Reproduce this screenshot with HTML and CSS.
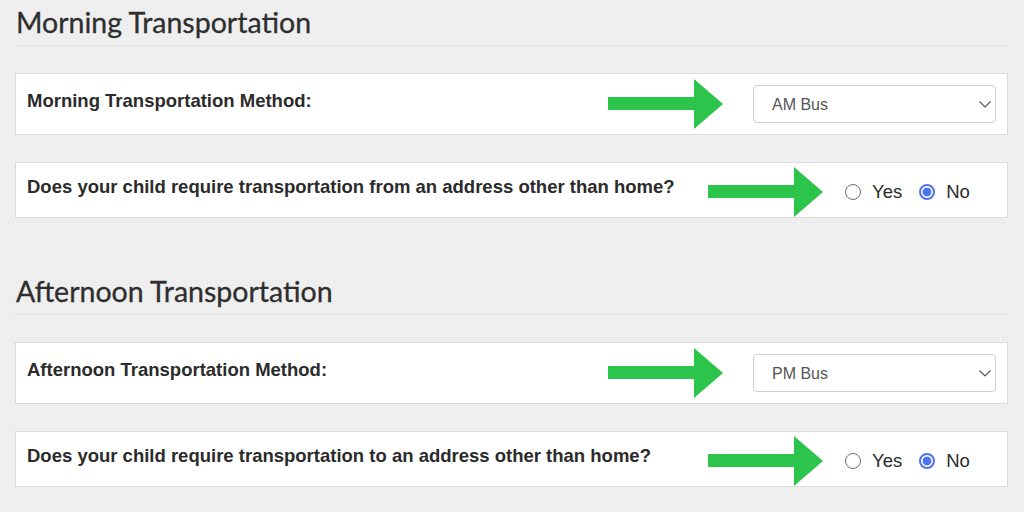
FILE: index.html
```html
<!DOCTYPE html>
<html lang="en">
<head>
<meta charset="utf-8">
<title>Transportation</title>
<link rel="stylesheet" href="styles.css">
</head>
<body>
<main class="page">
  <section class="group">
    <h2 class="group-title">Morning Transportation</h2>

    <div class="field field-select">
      <label class="field-label" for="am-method">Morning Transportation Method:</label>
      <svg class="pointer" viewBox="0 0 115 50" width="115" height="50" aria-hidden="true">
        <polygon points="0,18 86,18 86,0 115,25 86,50 86,31 0,31"/>
      </svg>
      <div class="select-wrap">
        <select id="am-method" class="select">
          <option>AM Bus</option>
        </select>
        <svg class="chevron" viewBox="0 0 12 7" width="12" height="7" aria-hidden="true">
          <polyline points="0.5,0.5 6,6 11.5,0.5"/>
        </svg>
      </div>
    </div>

    <div class="field field-radio">
      <span class="field-label">Does your child require transportation from an address other than home?</span>
      <svg class="pointer" viewBox="0 0 115 50" width="115" height="50" aria-hidden="true">
        <polygon points="0,18 86,18 86,0 115,25 86,50 86,31 0,31"/>
      </svg>
      <div class="radios">
        <label class="radio"><input type="radio" name="am-alt"><span>Yes</span></label>
        <label class="radio"><input type="radio" name="am-alt" checked><span>No</span></label>
      </div>
    </div>
  </section>

  <section class="group">
    <h2 class="group-title">Afternoon Transportation</h2>

    <div class="field field-select">
      <label class="field-label" for="pm-method">Afternoon Transportation Method:</label>
      <svg class="pointer" viewBox="0 0 115 50" width="115" height="50" aria-hidden="true">
        <polygon points="0,18 86,18 86,0 115,25 86,50 86,31 0,31"/>
      </svg>
      <div class="select-wrap">
        <select id="pm-method" class="select">
          <option>PM Bus</option>
        </select>
        <svg class="chevron" viewBox="0 0 12 7" width="12" height="7" aria-hidden="true">
          <polyline points="0.5,0.5 6,6 11.5,0.5"/>
        </svg>
      </div>
    </div>

    <div class="field field-radio">
      <span class="field-label">Does your child require transportation to an address other than home?</span>
      <svg class="pointer" viewBox="0 0 115 50" width="115" height="50" aria-hidden="true">
        <polygon points="0,18 86,18 86,0 115,25 86,50 86,31 0,31"/>
      </svg>
      <div class="radios">
        <label class="radio"><input type="radio" name="pm-alt"><span>Yes</span></label>
        <label class="radio"><input type="radio" name="pm-alt" checked><span>No</span></label>
      </div>
    </div>
  </section>
</main>
</body>
</html>
```

FILE: styles.css
```css
* {
  box-sizing: border-box;
}

html,
body {
  margin: 0;
  height: 100%;
}

body {
  background-color: #f0f0f0;
  background-image:
    linear-gradient(45deg, rgba(0, 0, 0, 0.012) 25%, transparent 25%, transparent 75%, rgba(0, 0, 0, 0.012) 75%),
    linear-gradient(45deg, rgba(0, 0, 0, 0.012) 25%, transparent 25%, transparent 75%, rgba(0, 0, 0, 0.012) 75%);
  background-size: 4px 4px;
  background-position: 0 0, 2px 2px;
  font-family: "Liberation Sans", Arial, sans-serif;
  color: #2b2b2b;
  overflow: hidden;
}

.page {
  padding: 5px 16px 0 15px;
}

.group + .group {
  margin-top: 56px;
}

.group-title {
  margin: 0 0 27px;
  padding: 0 0 6px 1px;
  font-family: Lato, "Open Sans", sans-serif;
  font-weight: 400;
  font-size: 28.5px;
  line-height: 34px;
  color: #2e2e2e;
  -webkit-text-stroke: 0.3px #2e2e2e;
  border-bottom: 1px solid #e2e2e2;
}

.field {
  display: flex;
  align-items: center;
  background: #fff;
  border: 1px solid #dcdcdc;
  padding: 11px;
}

.field + .field {
  margin-top: 27px;
}

.field-label {
  flex: 1;
  align-self: flex-start;
  font-weight: 700;
  font-size: 18.5px;
  line-height: 20px;
}

.field-select .field-label {
  margin-top: 6px;
}

.field-radio {
  padding: 4px 11px 0 11px;
}

.field-radio .field-label {
  margin-top: 10px;
}

.pointer {
  flex: none;
  display: block;
  fill: #2dc44c;
}

/* the arrow is taller than the dropdown, so it reaches into the card padding */
.field-select .pointer {
  margin: -6px 30px -6px 0;
}

.field-radio .pointer {
  margin-right: 22px;
}

/* dropdown */
.select-wrap {
  position: relative;
  flex: none;
  width: 243px;
}

.select {
  display: block;
  width: 100%;
  height: 38px;
  margin: 0;
  padding: 0 30px 0 18px;
  font-family: "Liberation Sans", Arial, sans-serif;
  font-size: 16px;
  color: #555;
  background: #fff;
  border: 1px solid #cfcfcf;
  border-radius: 4px;
  appearance: none;
  -webkit-appearance: none;
}

.chevron {
  position: absolute;
  right: 5px;
  top: 16px;
  fill: none;
  stroke: #555;
  stroke-width: 1.2;
  pointer-events: none;
}

/* yes / no choice */
.radios {
  flex: none;
  width: 151px;
  display: flex;
  align-items: center;
  gap: 17px;
}

.radio {
  display: flex;
  align-items: center;
  gap: 11px;
  font-size: 18.5px;
  color: #2b2b2b;
}

.radio input {
  appearance: none;
  -webkit-appearance: none;
  margin: 0;
  width: 16px;
  height: 16px;
  border: 1px solid #6f6f6f;
  border-radius: 50%;
  background: #fff;
}

.radio input:checked {
  border: 2px solid #4d72f2;
  background: radial-gradient(circle, #4d72f2 0 4px, #fff 4.8px);
}
```
